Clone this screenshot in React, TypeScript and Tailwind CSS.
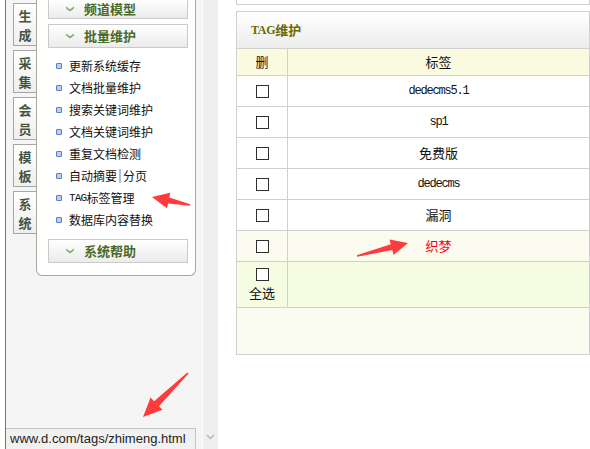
import React from 'react';

const mono = "font-['Liberation_Mono',monospace] text-[12px] tracking-[-1.2px]";

const sideTabs = [
  ['生', '成'],
  ['采', '集'],
  ['会', '员'],
  ['模', '板'],
  ['系', '统'],
];

const menuItems: React.ReactNode[] = [
  '更新系统缓存',
  '文档批量维护',
  '搜索关键词维护',
  '文档关键词维护',
  '重复文档检测',
  <>
    自动摘要
    <span className="mx-[2px] inline-block h-[14px] w-[2px] bg-[#a9c1e6]" />
    分页
  </>,
  <>
    <span className="font-['Liberation_Mono',monospace] text-[11px] tracking-[-0.8px]">TAG</span>标签管理
  </>,
  '数据库内容替换',
];

const tags: { label: string; mono?: boolean; hot?: boolean }[] = [
  { label: 'dedecms5.1', mono: true },
  { label: 'sp1', mono: true },
  { label: '免费版' },
  { label: 'dedecms', mono: true },
  { label: '漏洞' },
  { label: '织梦', hot: true },
];

function Chevron() {
  return (
    <svg width="8" height="6" viewBox="0 0 8 6" className="shrink-0">
      <path d="M0 0.5 L4 3.5 L8 0.5 L8 2.2 L4 5.5 L0 2.2Z" fill="#7aa85a" />
    </svg>
  );
}

function MenuHeader({
  title,
  className = '',
  leading = 'leading-[16px]',
}: {
  title: string;
  className?: string;
  leading?: string;
}) {
  return (
    <div
      className={`flex items-center border border-[#cacaca] bg-gradient-to-b from-white to-[#ebebeb] pl-[17px] ${className}`}
    >
      <Chevron />
      <span className={`ml-[10px] text-[13px] font-bold text-[#4b6a27] ${leading}`}>{title}</span>
    </div>
  );
}

function Box() {
  return <div className="h-[13px] w-[13px] border border-[#2e2e2e] bg-white" />;
}

// annotation arrow: thin tail widening into a filled head
function arrowPoints(x1: number, y1: number, x2: number, y2: number, head = 17, hw = 8, sw = 3, tw = 0.8) {
  const dx = x2 - x1;
  const dy = y2 - y1;
  const len = Math.hypot(dx, dy);
  const ux = dx / len;
  const uy = dy / len;
  const nx = -uy;
  const ny = ux;
  const bx = x2 - ux * head;
  const by = y2 - uy * head;
  const pts = [
    [x1 + nx * tw, y1 + ny * tw],
    [bx + nx * sw, by + ny * sw],
    [bx + nx * hw, by + ny * hw],
    [x2, y2],
    [bx - nx * hw, by - ny * hw],
    [bx - nx * sw, by - ny * sw],
    [x1 - nx * tw, y1 - ny * tw],
  ];
  return pts.map((p) => p.map((v) => v.toFixed(1)).join(',')).join(' ');
}

export default function App() {
  return (
    <div className="relative flex h-[449px] w-[590px] overflow-hidden bg-white font-['Noto_Sans_CJK_SC',sans-serif] text-[12px] text-[#111]">
      {/* left frame */}
      <div className="w-[5px] bg-white" />
      <div className="w-px bg-[#3b7dd8]" />
      <div className="flex w-[196px] bg-[#f5f5f5] pl-[7px]">
        <div className="flex w-[23px] flex-col gap-[4px] pt-[3px]">
          {sideTabs.map((t) => (
            <div
              key={t[0]}
              className="flex h-[43px] flex-col items-center justify-center border border-r-0 border-[#a6a6a6] bg-gradient-to-b from-white to-[#efefef] text-[13px] font-bold leading-[19px] text-[#46533f]"
            >
              <span>{t[0]}</span>
              <span>{t[1]}</span>
            </div>
          ))}
        </div>
        <div className="w-[160px] self-start rounded-b-[6px] border-x border-b border-[#a9a99b] bg-white pb-[12px] pl-[11px] pr-[7px]">
          {/* panel scrolled: the first header's top edge sits above the view */}
          <MenuHeader title="频道模型" className="h-[19px] border-t-0 pb-[1px]" leading="leading-[13px]" />
          <MenuHeader title="批量维护" className="mt-[5px] h-[24px]" />
          <ul className="pt-[7px]">
            {menuItems.map((item, i) => (
              <li key={i} className="flex h-[22px] items-center pl-[8px]">
                <span className="h-[6px] w-[6px] shrink-0 rounded-[1px] border border-[#5a7fb8] bg-[#bcd0f0]" />
                <span className="ml-[7px] flex items-center whitespace-nowrap">{item}</span>
              </li>
            ))}
          </ul>
          <MenuHeader title="系统帮助" className="mt-[8px] h-[24px]" />
        </div>
      </div>
      <div className="w-px bg-white" />
      <div className="flex w-[15px] flex-col items-center justify-end bg-[#efefef] pb-[9px]">
        <svg width="9" height="6" viewBox="0 0 9 6">
          <path d="M1 1 L4.5 4.5 L8 1" stroke="#b5b5b5" strokeWidth="1.4" fill="none" />
        </svg>
      </div>

      {/* main content */}
      <div className="flex-1 pl-[18px]">
        <div className="h-[5px] w-[354px] border-x border-b border-[#d0d0d0]" />
        <div className="mt-[6px] w-[354px] border border-[#d0d0d0]">
          <div className="flex h-[37px] items-center border-b border-[#d0d0d0] bg-gradient-to-b from-white to-[#ececec] pl-[14px] font-bold text-[#6b6b00]">
            <span className="font-['Liberation_Serif',serif] text-[12px] font-bold tracking-[-0.3px]">TAG</span>
            <span className="text-[13px]">维护</span>
          </div>
          <div className="flex h-[27px] border-b border-[#d0d0d0] bg-[#fafae1]">
            <div className="flex w-[51px] items-center justify-center border-r border-[#d0d0d0] text-[13px]">删</div>
            <div className="flex flex-1 items-center justify-center text-[13px]">标签</div>
          </div>
          {tags.map((t) => (
            <div
              key={t.label}
              className={`flex h-[31px] border-b border-[#d0d0d0] ${t.hot ? 'bg-[#fbfbef]' : 'bg-white'}`}
            >
              <div className="flex w-[51px] items-center justify-center border-r border-[#d0d0d0]">
                <Box />
              </div>
              <div
                className={`flex flex-1 items-center justify-center ${t.mono ? mono : 'text-[13px]'} ${
                  t.hot ? 'text-[#ff0000]' : ''
                }`}
              >
                {t.label}
              </div>
            </div>
          ))}
          <div className="flex h-[46px] border-b border-[#d0d0d0] bg-[#f6fce2]">
            <div className="flex w-[51px] flex-col items-center justify-center gap-[4px] border-r border-[#d0d0d0]">
              <Box />
              <span className="text-[13px] leading-[16px]">全选</span>
            </div>
            <div className="flex-1" />
          </div>
          <div className="h-[46px] bg-[#fbfcf0]" />
        </div>
      </div>

      {/* status bar */}
      <div className="absolute bottom-0 left-[6px] flex h-[21px] w-[190px] items-center border-t border-r border-[#c4c4c4] bg-[#f1f1f1] pl-[4px] font-['Liberation_Sans',sans-serif] text-[13px] text-[#222]">
        www.d.com/tags/zhimeng.html
      </div>

      {/* red annotation arrows */}
      <svg className="pointer-events-none absolute left-0 top-0" width="590" height="449">
        <polygon points={arrowPoints(190, 205, 152, 197)} fill="#ff3b3b" />
        <polygon points={arrowPoints(188, 373, 143, 417, 19, 8.5, 3.5)} fill="#ff3b3b" />
        <polygon points={arrowPoints(357, 256, 408, 243)} fill="#ff3b3b" />
      </svg>
    </div>
  );
}
